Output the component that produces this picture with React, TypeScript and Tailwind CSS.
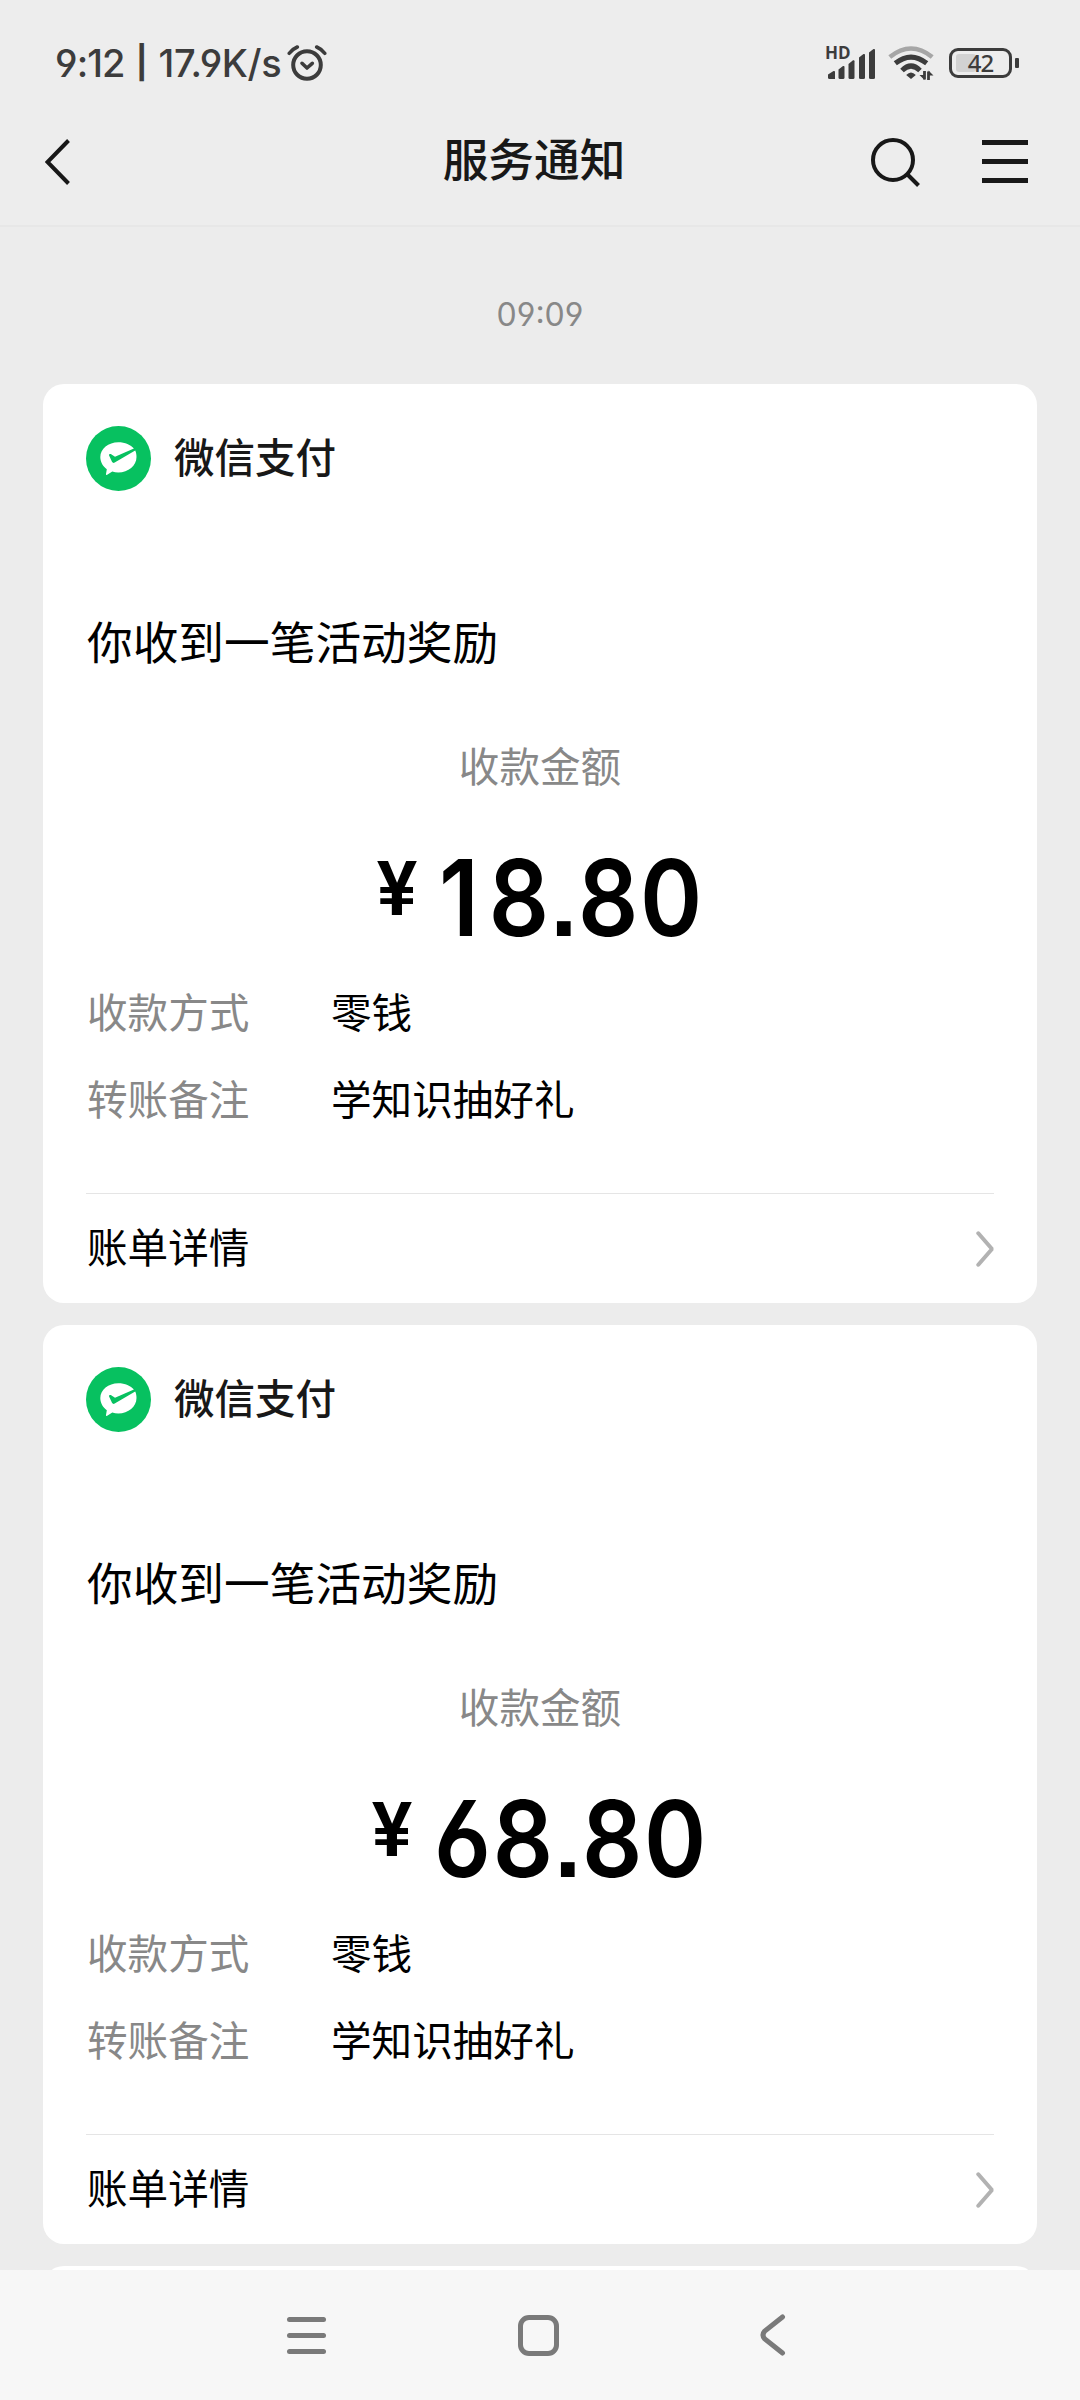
type Payment = {
  id: number;
  amount: string;
  method: string;
  note: string;
};

const payments: Payment[] = [
  { id: 1, amount: "18.80", method: "零钱", note: "学知识抽好礼" },
  { id: 2, amount: "68.80", method: "零钱", note: "学知识抽好礼" },
];

function AlarmIcon() {
  return (
    <svg width="40" height="38" viewBox="0 0 40 38" fill="none" stroke="#3c3c3c">
      <circle cx="20" cy="21" r="13.8" strokeWidth="4" />
      <path d="M15 19.3l5 4.7 5.300-4.700" strokeWidth="3.600" strokeLinecap="round" strokeLinejoin="round" />
      <path d="M2.300 9.300Q5.500 5 10.300 3M29.700 3Q34.500 5 37.700 9.300" strokeWidth="3.600" strokeLinecap="round" />
    </svg>
  );
}

function SignalIcon() {
  return (
    <svg width="48" height="32" viewBox="0 0 48 32" fill="#3c3c3c">
      <path d="M0 26.500L5.500 23q1.500-.500 1.500 1v7H1.500Q0 31 0 29.500z" />
      <path d="M10.500 21.500L15 18q1.500-.500 1.500 1v10.500q0 1.500-1.500 1.500h-3q-1.500 0-1.500-1.500z" />
      <path d="M20.500 16L25 12.300q1.500-.500 1.500 1v16.200q0 1.500-1.500 1.500h-3q-1.500 0-1.500-1.500z" />
      <path d="M31 9.500L35.500 6q1.500-.500 1.500 1v22.500q0 1.500-1.500 1.500h-3Q31 31 31 29.500z" />
      <path d="M41 4.500L45.500 1Q47 .5 47 2v27.500q0 1.500-1.500 1.500h-3Q41 31 41 29.500z" />
    </svg>
  );
}

function WifiIcon() {
  return (
    <svg width="46" height="36" viewBox="0 0 46 36" fill="none">
      <path d="M1.800 12Q23-5 44.200 12" stroke="#a6a6a6" strokeWidth="4.600" />
      <path d="M7.300 18.300Q23 5.800 38.700 18.300" stroke="#3c3c3c" strokeWidth="5" />
      <path d="M14 25.500Q23 16.500 32 25.500" stroke="#3c3c3c" strokeWidth="5" />
      <path d="M18.200 30Q23 25 27.800 30L23 34z" fill="#3c3c3c" />
      <path d="M36.500 26v8.500M40.500 35v-8.500" stroke="#3c3c3c" strokeWidth="2.800" />
      <path d="M31.500 30h5v5zM40.500 25.500l5 5h-5z" fill="#3c3c3c" />
    </svg>
  );
}

function PayLogo() {
  return (
    <svg width="65" height="65" viewBox="0 0 65 65">
      <circle cx="32.500" cy="32.500" r="32.500" fill="#07c160" />
      <path
        fill="#fff"
        d="M32.300 16.300c6.700 0 12.500 2.500 15.600 6.300L29 30.800l-3.800-2.600c-1.200-.8-2.600 0-2.100 1.200l2.900 6.400c.5 1.100 1.600 1.400 2.700.8L49.200 24.400c1 2 1.300 4.200 1.300 6.600 0 8.600-8.100 15.500-18.200 15.500-2.200 0-4.200-.3-6-.9L21.200 48.800c-.9.400-1.400-.1-1.200-.9l.8-4.700C17 40.400 14.300 36 14.300 31c0-8.200 8.100-14.700 18-14.700z"
      />
    </svg>
  );
}

function StatusBar() {
  return (
    <div className="flex h-[98px] items-center justify-between pt-7 pl-[55px] pr-[61px] text-[#3c3c3c]">
      <div className="flex items-center">
        <div className="flex w-[232px] items-center whitespace-nowrap font-[Inter] text-[38px] font-medium [font-feature-settings:'cv03','cv04']">
          <span className="tracking-[-0.9px]">9:12</span>
          <span className="mx-[11px] text-[32px] font-bold">|</span>
          <span className="tracking-[-0.4px]">17.9K/s</span>
        </div>
        <AlarmIcon />
      </div>
      <div className="flex items-center">
        <div className="relative mr-[12px] pt-px">
          <SignalIcon />
          <span className="absolute -left-[3px] -top-[3px] font-['Open_Sans'] text-[17px] leading-[17px] font-bold">
            HD
          </span>
        </div>
        <WifiIcon />
        <div className="ml-[15px] flex items-center gap-[3px]">
          <div className="relative flex h-[30px] w-[63px] items-center justify-center rounded-[9px] border-3 border-[#3c3c3c]">
            <div className="absolute left-1 top-[3px] h-[18px] w-[20px] rounded-[3px] bg-[#d2d2d2]" />
            <span className="relative font-['Noto_Sans'] text-[24px] leading-none font-medium tracking-[-1px]">42</span>
          </div>
          <div className="h-[10px] w-1 rounded-[1px] bg-[#3c3c3c]" />
        </div>
      </div>
    </div>
  );
}

function TitleBar() {
  return (
    <div className="flex h-[129px] items-center justify-between border-b-2 border-[#e7e7e7] pl-[45px] pr-[52px] text-[#181818]">
      <svg className="mr-[127px]" width="26" height="46" viewBox="0 0 26 46" fill="none" stroke="currentColor" strokeWidth="4">
        <path d="M23.500 1.500L2.500 23l21 21.500" />
      </svg>
      <h1 className="mb-[7px] text-[45.7px] leading-none font-medium">服务通知</h1>
      <div className="flex items-center justify-end gap-[62px]">
        <svg width="50" height="50" viewBox="0 0 50 50" fill="none" stroke="currentColor" strokeWidth="4">
          <circle cx="23" cy="23" r="20" />
          <path d="M37 37l11.500 11.500" />
        </svg>
        <div className="flex h-[43px] w-[46px] flex-col justify-between">
          <div className="h-[5px] bg-current" />
          <div className="h-[5px] bg-current" />
          <div className="h-[5px] bg-current" />
        </div>
      </div>
    </div>
  );
}

function Amount({ value }: { value: string }) {
  // a leading 1 is narrow, so it gets extra room to line up like the other digits
  const lead = value.startsWith("1") ? "first-letter:tracking-[11px]" : "";

  return (
    <div className="mt-[41px] flex h-[120px] items-center justify-center text-black">
      <span className="mr-[22px] -mt-[18px] font-[Roboto] text-[76px] leading-none font-semibold">¥</span>
      <span
        className={`-mr-[34px] block origin-left scale-x-[0.89] font-[Inter] text-[106px] leading-none font-semibold tracking-[1.900px] [font-feature-settings:'cv03','cv04','ss07'] ${lead}`}
      >
        {value}
      </span>
    </div>
  );
}

function DetailRow({ label, value }: { label: string; value: string }) {
  return (
    <div className="flex h-[60px] items-center pb-[3px] pl-px text-[40.6px] leading-none">
      <span className="w-[244px] text-[#888888]">{label}</span>
      <span className="text-black">{value}</span>
    </div>
  );
}

function PaymentCard({ payment }: { payment: Payment }) {
  return (
    <div className="h-[919px] rounded-[21px] bg-white px-[43px] pt-[42px]">
      <div className="flex h-[65px] items-center gap-[23px]">
        <PayLogo />
        <span className="mb-[4px] text-[40.5px] leading-none font-medium text-[#181818]">微信支付</span>
      </div>

      <h2 className="mt-[122px] flex h-[60px] items-center pb-[5px] pl-px text-[45.7px] leading-none">
        你收到一笔活动奖励
      </h2>

      <div className="mt-16 flex h-[60px] items-center justify-center pb-[3px] text-[40.6px] leading-none text-[#888888]">
        收款金额
      </div>

      <Amount value={payment.amount} />

      <div className="mt-[25px] flex flex-col gap-[27px]">
        <DetailRow label="收款方式" value={payment.method} />
        <DetailRow label="转账备注" value={payment.note} />
      </div>

      <div className="mt-[63px] flex h-[110px] items-center justify-between border-t border-[#e5e5e5]">
        <span className="pb-[4px] pl-px text-[40.6px] leading-none">账单详情</span>
        <svg width="20" height="36" viewBox="0 0 20 36" fill="none" stroke="#b2b2b2" strokeWidth="4">
          <path d="M4.300 2.300L18 18L4.300 33.700" strokeLinecap="round" strokeLinejoin="bevel" />
        </svg>
      </div>
    </div>
  );
}

function NavBar() {
  return (
    <div className="flex h-[130px] shrink-0 items-center bg-[#f7f7f7] pl-[287px] text-[#7a7a7a]">
      <div className="flex h-[37px] w-[39px] flex-col justify-between">
        <div className="h-[5px] rounded-full bg-current" />
        <div className="h-[5px] rounded-full bg-current" />
        <div className="h-[5px] rounded-full bg-current" />
      </div>
      <div className="ml-[192px] h-[41px] w-[41px] rounded-[11px] border-5 border-current" />
      <svg
        className="ml-[201px]"
        width="26"
        height="42"
        viewBox="0 0 26 42"
        fill="none"
        stroke="currentColor"
        strokeWidth="5"
        strokeLinecap="round"
      >
        <path d="M22.500 3L4.800 17Q1.200 21 4.800 25L22.500 39" />
      </svg>
    </div>
  );
}

export default function App() {
  return (
    <div className="flex h-[2400px] w-[1080px] flex-col overflow-hidden bg-[#ededed] font-['Noto_Sans_CJK_SC',sans-serif]">
      <StatusBar />
      <TitleBar />
      <main className="flex-1 overflow-hidden bg-[#ececec] px-[43px]">
        <div className="flex h-[157px] items-center justify-center pt-[19px] font-[Inter] text-[32px] text-[#888888] [font-feature-settings:'cv03','cv04']">
          09:09
        </div>
        <div className="flex flex-col gap-[22px]">
          {payments.map((payment) => (
            <PaymentCard key={payment.id} payment={payment} />
          ))}
          {/* next message, mostly hidden behind the nav bar */}
          <div className="h-[60px] rounded-[21px] bg-white" />
        </div>
      </main>
      <NavBar />
    </div>
  );
}
